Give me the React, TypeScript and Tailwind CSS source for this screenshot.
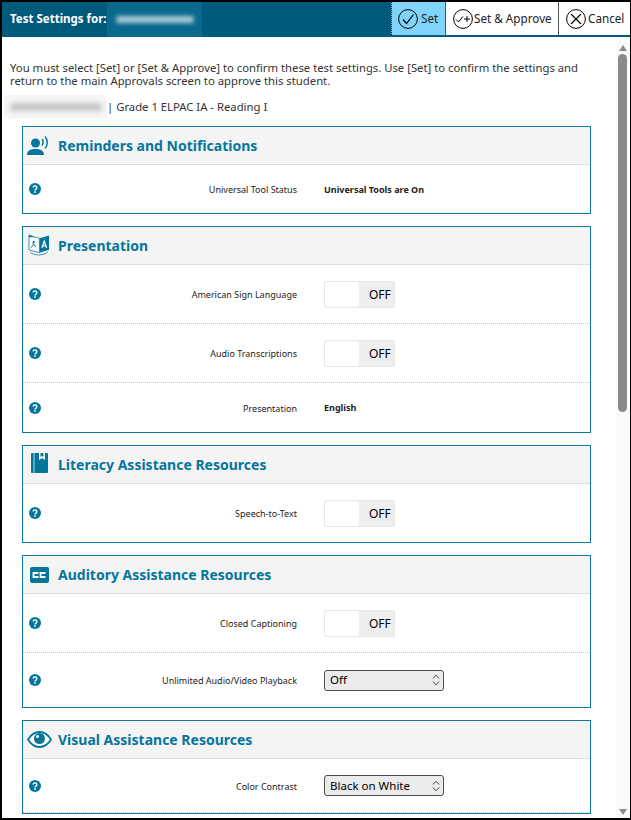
import { ReactNode } from "react";
import { ChevronsUpDown } from "lucide-react";

const font = "font-['Noto_Sans',sans-serif]";

function HelpIcon() {
  return (
    <svg width="12" height="12" viewBox="0 0 12 12" className="shrink-0">
      <circle cx="6" cy="6" r="6" fill="#04769c" />
      <path d="M4.2 4.6a1.8 1.7 0 1 1 2.7 1.5c-.6.4-.9.6-.9 1.3" fill="none" stroke="#fff" strokeWidth="1.4" />
      <rect x="5.2" y="8.3" width="1.6" height="1.5" fill="#fff" />
    </svg>
  );
}

function Toggle() {
  return (
    <div className="flex h-[27px] w-[71px] rounded-[2px] border border-[#e6e6e6] bg-[#eeeeee]">
      <div className="w-[34px] rounded-[2px] bg-white" />
      <span className="pl-[10px] text-[12px] leading-[25px] text-black">OFF</span>
    </div>
  );
}

function Select({ value }: { value: string }) {
  return (
    <div className="flex h-[21px] w-[120px] items-center justify-between rounded-[3px] border border-[#4d4d4d] bg-[#ebebeb] pl-[5px] text-[11.5px] text-black">
      <span>{value}</span>
      <ChevronsUpDown size={14} strokeWidth={1.25} />
    </div>
  );
}

function Row({ label, height, last, children }: { label: string; height: string; last?: boolean; children: ReactNode }) {
  return (
    <div className={`flex items-center ${height} ${last ? "" : "border-b border-dotted border-[#c8c8c8]"}`}>
      <div className="ml-[6px]">
        <HelpIcon />
      </div>
      <div className="mt-[2px] w-[256px] text-right text-[9px] text-[#222]">{label}</div>
      <div className="ml-[27px]">{children}</div>
    </div>
  );
}

function Section({ icon, title, children }: { icon: ReactNode; title: string; children: ReactNode }) {
  return (
    <section className="mb-[12px] w-[569px] border border-[#0c789f]">
      <div className="flex h-[38px] items-center border-b border-dotted border-[#c8c8c8] bg-[#f4f4f4]">
        <div className="flex w-[35px] justify-center pr-[3px]">{icon}</div>
        <h2 className="text-[14px] font-bold text-[#04769c]">{title}</h2>
      </div>
      {children}
    </section>
  );
}

function PersonIcon() {
  return (
    <svg width="24" height="22" viewBox="0 0 24 22" fill="#04769c">
      <circle cx="8.5" cy="8" r="4.5" />
      <path d="M0 20c0-4 3-6 8.500-6s8.500 2 8.500 6z" />
      <path d="M15 4c1.500 1.500 1.500 5 0 6.500M18 1.500c3 3 3 9 0 12" fill="none" stroke="#04769c" strokeWidth="1.500" />
    </svg>
  );
}

function LanguageIcon() {
  return (
    <svg width="22" height="25" viewBox="0 0 23 25">
      <path d="M12 5l10-3v15l-10 3z" fill="#04769c" />
      <path d="M1 2l11 3v15L1 17z" fill="#fff" stroke="#04769c" strokeWidth="0.8" />
      <path d="M1 1v3l6 0z" fill="#04769c" />
      <circle cx="6" cy="9" r="1.200" fill="#04769c" />
      <path d="M3 15l3-4 2 3M6 11l-1-1" fill="none" stroke="#04769c" strokeWidth="1" />
      <path d="M14.500 15l2.500-7 2.500 7M15.500 13h3" fill="none" stroke="#fff" strokeWidth="1.300" />
      <path d="M2 19c3 4 14 5 19 0" fill="none" stroke="#04769c" strokeWidth="0.8" />
    </svg>
  );
}

function BookIcon() {
  return (
    <svg width="17" height="20" viewBox="0 0 17 20" className="-mt-[4px]">
      <rect x="0" y="0" width="17" height="20" rx="1" fill="#04769c" />
      <rect x="2.500" y="0" width="1" height="20" fill="#b5d6e2" />
      <path d="M8 0h6v7l-3-2-3 2z" fill="#fff" />
      <path d="M9.500 0h3v4l-1.500-1-1.500 1z" fill="#04769c" />
    </svg>
  );
}

function CcIcon() {
  return (
    <svg width="19" height="16" viewBox="0 0 19 16">
      <rect width="19" height="16" rx="2" fill="#04769c" />
      <path d="M8.500 6H3.500v4h5M15.500 6h-5v4h5" fill="none" stroke="#fff" strokeWidth="1.800" />
    </svg>
  );
}

function EyeIcon() {
  return (
    <svg width="25" height="17" viewBox="0 0 25 17">
      <path d="M1 8.500C4 3.500 8 1 12.500 1S21 3.500 24 8.500C21 13.500 17 16 12.500 16S4 13.500 1 8.500z" fill="#fff" stroke="#04769c" strokeWidth="1.800" />
      <circle cx="12.500" cy="7.500" r="5.500" fill="#04769c" />
      <circle cx="10.500" cy="5.500" r="1.500" fill="#fff" />
    </svg>
  );
}

function CircleCheck() {
  return (
    <svg width="20" height="20" viewBox="0 0 20 20" fill="none" stroke="#000" strokeWidth="1" className="shrink-0">
      <circle cx="10" cy="10" r="9.400" />
      <path d="M5 10.500l3.500 4L15.500 5.500" strokeWidth="1.200" />
    </svg>
  );
}

function CirclePlus() {
  return (
    <svg width="20" height="20" viewBox="0 0 20 20" fill="none" stroke="#000" strokeWidth="1" className="shrink-0">
      <circle cx="10" cy="10" r="9.400" />
      <path d="M3 10.500l2.500 2.500L10 7.500M11 10h6M14 7v6" />
    </svg>
  );
}

function CircleX() {
  return (
    <svg width="20" height="20" viewBox="0 0 20 20" fill="none" stroke="#000" strokeWidth="1" className="shrink-0">
      <circle cx="10" cy="10" r="9.400" />
      <path d="M5 5l10 10M15 5L5 15" strokeWidth="1.200" />
    </svg>
  );
}

export default function App() {
  return (
    <div className={`${font} flex h-[820px] w-[631px] flex-col overflow-hidden border-b-2 border-l-2 border-r border-t-2 border-black bg-white`}>
      <header className="flex h-[35px] shrink-0 items-stretch border-b-2 border-[#005a7c] bg-[#005a7c]">
        <div className="flex w-[105px] shrink-0 items-center whitespace-nowrap pl-[8px] text-[11.5px] font-bold text-white">Test Settings for:</div>
        <div className="flex h-[35px] w-[95px] shrink-0 items-center justify-center bg-[#0a6a8e]">
          <div className="h-[7px] w-[78px] rounded-sm bg-[#a9c9d8] blur-[2px]" />
        </div>
        <div className="flex-1" />
        <button className="flex w-[54px] shrink-0 items-center gap-[3px] border-l border-dotted border-black bg-[#80d4fc] pl-[6px] text-[11.7px] text-[#222]">
          <CircleCheck />
          Set
        </button>
        <button className="flex w-[113px] shrink-0 items-center gap-[1px] whitespace-nowrap border-l border-[#555] bg-white pl-[7px] text-[11.7px] text-[#222]">
          <CirclePlus />
          Set &amp; Approve
        </button>
        <button className="flex w-[72px] shrink-0 items-center gap-[2px] border-l border-[#555] bg-white pl-[7px] text-[11.7px] text-[#222]">
          <CircleX />
          Cancel
        </button>
      </header>

      <div className="flex min-h-0 flex-1">
        <main className="min-w-0 flex-1 overflow-hidden">
          <p className="ml-[8px] mt-[24px] w-[600px] text-[11.3px] leading-[13px] text-[#333]">
            You must select [Set] or [Set &amp; Approve] to confirm these test settings. Use [Set] to confirm the settings and return to the main Approvals screen to approve this student.
          </p>
          <div className="mt-[8px] flex h-[24px] items-center text-[11.3px] text-[#333]">
            <div className="ml-[2px] flex h-[24px] w-[103px] shrink-0 items-center justify-center bg-[#f6f6f6]">
              <div className="h-[8px] w-[92px] rounded-sm bg-[#c4c4c4] blur-[2.5px]" />
            </div>
            <span>| Grade 1 ELPAC IA - Reading I</span>
          </div>

          <div className="ml-[20px] mt-[7px]">
            <Section icon={<PersonIcon />} title="Reminders and Notifications">
              <Row label="Universal Tool Status" height="h-[48px]" last>
                <span className="mt-[2px] block text-[9px] font-bold text-[#222]">Universal Tools are On</span>
              </Row>
            </Section>
            <Section icon={<LanguageIcon />} title="Presentation">
              <Row label="American Sign Language" height="h-[59px]"><Toggle /></Row>
              <Row label="Audio Transcriptions" height="h-[59px]"><Toggle /></Row>
              <Row label="Presentation" height="h-[49px]" last>
                <span className="block text-[9px] font-bold text-[#222]">English</span>
              </Row>
            </Section>
            <Section icon={<BookIcon />} title="Literacy Assistance Resources">
              <Row label="Speech-to-Text" height="h-[58px]" last><Toggle /></Row>
            </Section>
            <Section icon={<CcIcon />} title="Auditory Assistance Resources">
              <Row label="Closed Captioning" height="h-[59px]"><Toggle /></Row>
              <Row label="Unlimited Audio/Video Playback" height="h-[54px]" last><Select value="Off" /></Row>
            </Section>
            <Section icon={<EyeIcon />} title="Visual Assistance Resources">
              <Row label="Color Contrast" height="h-[54px]"><Select value="Black on White" /></Row>
            </Section>
          </div>
        </main>

        <div className="flex w-[14px] shrink-0 flex-col items-center bg-[#fafafa] pr-[1px]">
          <div className="mt-[8px] h-0 w-0 border-x-[4.5px] border-b-[6px] border-x-transparent border-b-[#8a8a8a]" />
          <div className="mt-[3px] h-[358px] w-[9px] rounded-full bg-[#8a8a8a]" />
          <div className="mt-auto mb-[3px] h-0 w-0 border-x-[4.5px] border-t-[6px] border-x-transparent border-t-[#8a8a8a]" />
        </div>
      </div>
    </div>
  );
}
